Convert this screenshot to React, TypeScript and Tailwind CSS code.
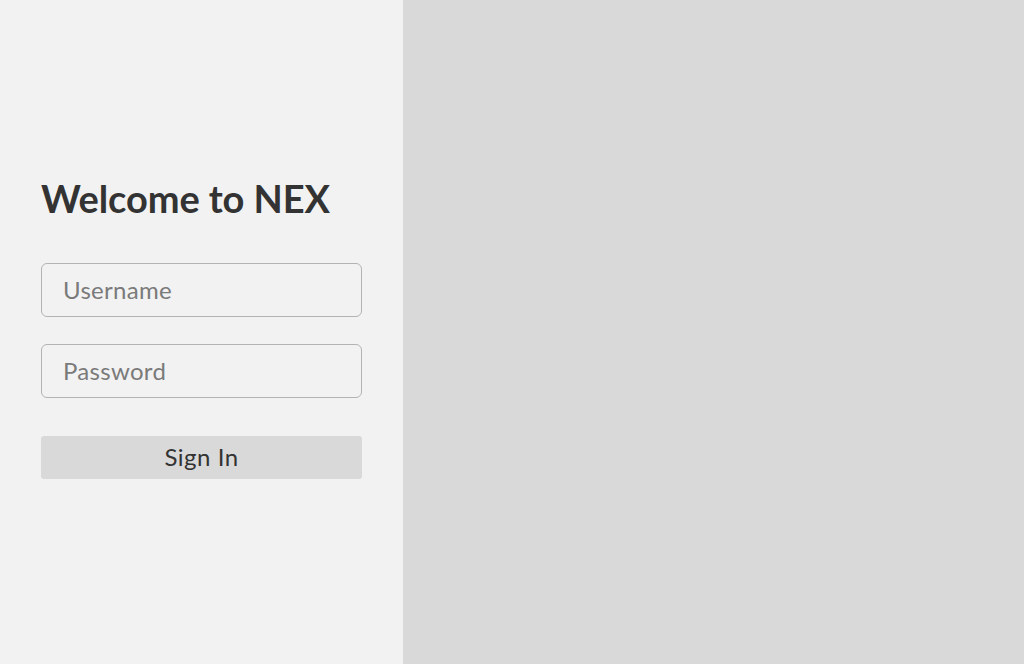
import React from 'react';

export default function App() {
  return (
    <div className="flex h-[664px] w-[1024px] font-['Lato','Open_Sans',sans-serif]">
      <div className="flex w-[403px] flex-col justify-center bg-[#f2f2f2] px-[41px] pb-[10px]">
        <h1 className="text-[38px] font-bold leading-[44px] tracking-[-0.1px] text-[#333333]">Welcome to NEX</h1>
        <form className="mt-[43px] flex flex-col" onSubmit={(e) => e.preventDefault()}>
          <input
            type="text"
            placeholder="Username"
            className="h-[54px] w-full rounded-[6px] border border-[#b3b3b3] bg-[#f2f2f2] px-[21px] text-[24px] tracking-[0.3px] text-[#333333] outline-none placeholder:text-[#7a7a7a]"
          />
          <input
            type="password"
            placeholder="Password"
            className="mt-[27px] h-[54px] w-full rounded-[6px] border border-[#b3b3b3] bg-[#f2f2f2] px-[21px] text-[24px] tracking-[0.3px] text-[#333333] outline-none placeholder:text-[#7a7a7a]"
          />
          <button
            type="submit"
            className="mt-[38px] h-[43px] w-full rounded-[3px] bg-[#d9d9d9] text-[24px] tracking-[0.5px] text-[#333333]"
          >
            Sign In
          </button>
        </form>
      </div>
      <div className="flex-1 bg-[#d9d9d9]" />
    </div>
  );
}
